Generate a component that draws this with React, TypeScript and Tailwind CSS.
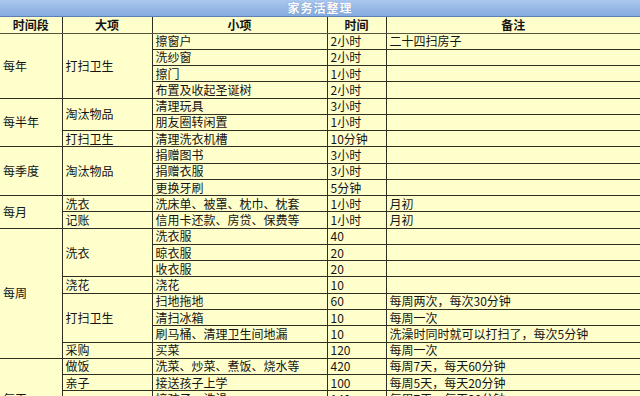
import React from 'react';

type Row = {
  period?: { label: string; span: number };
  cat?: { label: string; span: number };
  item: string;
  time: string;
  note?: string;
};

const rows: Row[] = [
  { period: { label: '每年', span: 4 }, cat: { label: '打扫卫生', span: 4 }, item: '擦窗户', time: '2小时', note: '二十四扫房子' },
  { item: '洗纱窗', time: '2小时' },
  { item: '擦门', time: '1小时' },
  { item: '布置及收起圣诞树', time: '2小时' },
  { period: { label: '每半年', span: 3 }, cat: { label: '淘汰物品', span: 2 }, item: '清理玩具', time: '3小时' },
  { item: '朋友圈转闲置', time: '1小时' },
  { cat: { label: '打扫卫生', span: 1 }, item: '清理洗衣机槽', time: '10分钟' },
  { period: { label: '每季度', span: 3 }, cat: { label: '淘汰物品', span: 3 }, item: '捐赠图书', time: '3小时' },
  { item: '捐赠衣服', time: '3小时' },
  { item: '更换牙刷', time: '5分钟' },
  { period: { label: '每月', span: 2 }, cat: { label: '洗衣', span: 1 }, item: '洗床单、被罩、枕巾、枕套', time: '1小时', note: '月初' },
  { cat: { label: '记账', span: 1 }, item: '信用卡还款、房贷、保费等', time: '1小时', note: '月初' },
  { period: { label: '每周', span: 8 }, cat: { label: '洗衣', span: 3 }, item: '洗衣服', time: '40' },
  { item: '晾衣服', time: '20' },
  { item: '收衣服', time: '20' },
  { cat: { label: '浇花', span: 1 }, item: '浇花', time: '10' },
  { cat: { label: '打扫卫生', span: 3 }, item: '扫地拖地', time: '60', note: '每周两次，每次30分钟' },
  { item: '清扫冰箱', time: '10', note: '每周一次' },
  { item: '刷马桶、清理卫生间地漏', time: '10', note: '洗澡时同时就可以打扫了，每次5分钟' },
  { cat: { label: '采购', span: 1 }, item: '买菜', time: '120', note: '每周一次' },
  { period: { label: '每天', span: 5 }, cat: { label: '做饭', span: 1 }, item: '洗菜、炒菜、煮饭、烧水等', time: '420', note: '每周7天，每天60分钟' },
  { cat: { label: '亲子', span: 1 }, item: '接送孩子上学', time: '100', note: '每周5天，每天20分钟' },
  { cat: { label: '亲子', span: 3 }, item: '接孩子、洗澡', time: '140', note: '每周7天，每天20分钟' },
  { item: '讲故事', time: '140', note: '每周7天，每天20分钟' },
  { item: '辅导作业', time: '140', note: '每周7天，每天20分钟' },
];

const cell = 'border-b border-r border-[#2f2f22] px-[3px] py-0 align-middle whitespace-nowrap overflow-hidden';

export default function App() {
  return (
    <div
      className="w-[640px] h-[396px] overflow-hidden bg-[#ffffcc] text-[12px] leading-none text-[#141414]"
      style={{ fontFamily: '"Noto Sans CJK SC", "Noto Sans", sans-serif' }}
    >
      <div className="h-[17px] bg-gradient-to-b from-[#aac7ee] to-[#85abdf] border-b border-[#5d80b6] flex items-center justify-center">
        <span className="text-white font-bold tracking-[1px] [text-shadow:0_0_1px_#5a7db5]">家务活整理</span>
      </div>
      <table className="w-[640px] table-fixed border-collapse">
        <colgroup>
          <col className="w-[62px]" />
          <col className="w-[90px]" />
          <col className="w-[175px]" />
          <col className="w-[59px]" />
          <col className="w-[254px]" />
        </colgroup>
        <thead>
          <tr className="h-[16px]">
            <th className={`${cell} text-center font-bold border-b-[#55553f]`}>时间段</th>
            <th className={`${cell} text-center font-bold border-b-[#55553f]`}>大项</th>
            <th className={`${cell} text-center font-bold border-b-[#55553f]`}>小项</th>
            <th className={`${cell} text-center font-bold border-b-[#55553f]`}>时间</th>
            <th className={`${cell} text-center font-bold border-b-[#55553f] border-r-0`}>备注</th>
          </tr>
        </thead>
        <tbody>
          {rows.map((r, i) => (
            <tr key={i} className="h-[16.28px]">
              {r.period && (
                <td rowSpan={r.period.span} className={cell}>
                  {r.period.label}
                </td>
              )}
              {r.cat && (
                <td rowSpan={r.cat.span} className={cell}>
                  {r.cat.label}
                </td>
              )}
              <td className={cell}>{r.item}</td>
              <td className={cell}>{r.time}</td>
              <td className={`${cell} border-r-0`}>{r.note ?? ''}</td>
            </tr>
          ))}
        </tbody>
      </table>
    </div>
  );
}
